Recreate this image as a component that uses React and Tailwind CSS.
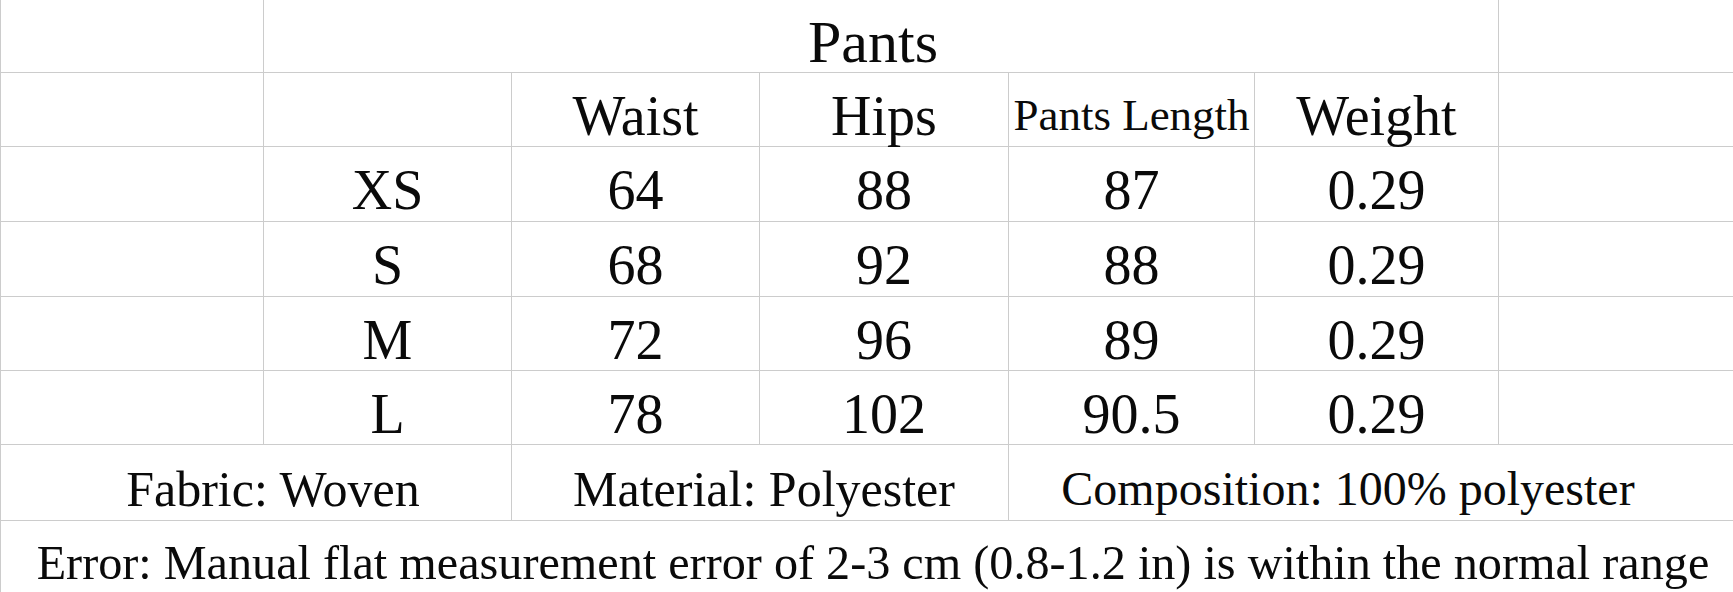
import React from "react";

const sizes = [
  ["XS", "64", "88", "87", "0.29"],
  ["S", "68", "92", "88", "0.29"],
  ["M", "72", "96", "89", "0.29"],
  ["L", "78", "102", "90.5", "0.29"],
];

function Cell({ children, className = "" }) {
  return (
    <div
      className={`flex items-center justify-center pt-3 border-b border-r border-[#cccccc] whitespace-nowrap ${className}`}
    >
      {children}
    </div>
  );
}

export default function App() {
  return (
    <div className="w-[1733px] h-[592px] bg-white text-[#0a0a0a] overflow-hidden font-['Liberation_Serif','DejaVu_Serif',serif]">
      <div className="grid grid-cols-[263px_248px_248px_249px_246px_244px_1fr] grid-rows-[73px_74px_75px_75px_74px_74px_76px_72px] border-l border-[#cccccc] text-[56px] leading-none">
        {/* title row */}
        <Cell />
        <Cell className="col-span-5 pr-4 text-[60px]">Pants</Cell>
        <Cell className="border-r-0" />

        {/* header row */}
        <Cell />
        <Cell />
        <Cell>Waist</Cell>
        <Cell>Hips</Cell>
        <Cell className="text-[45px]">Pants Length</Cell>
        <Cell>Weight</Cell>
        <Cell className="border-r-0" />

        {sizes.map((row) => (
          <React.Fragment key={row[0]}>
            <Cell />
            {row.map((v, i) => (
              <Cell key={i}>{v}</Cell>
            ))}
            <Cell className="border-r-0" />
          </React.Fragment>
        ))}

        {/* fabric row */}
        <Cell className="col-span-2 pl-[34px] text-[50px]">Fabric: Woven</Cell>
        <Cell className="col-span-2 pl-2 text-[50px]">Material: Polyester</Cell>
        <Cell className="col-span-3 border-r-0 pr-[46px] text-[48px]">
          Composition: 100% polyester
        </Cell>

        {/* note row */}
        <Cell className="col-span-7 border-r-0 border-b-0 pl-[12px] text-[48.2px]">
          Error: Manual flat measurement error of 2-3 cm (0.8-1.2 in) is within
          the normal range
        </Cell>
      </div>
    </div>
  );
}
